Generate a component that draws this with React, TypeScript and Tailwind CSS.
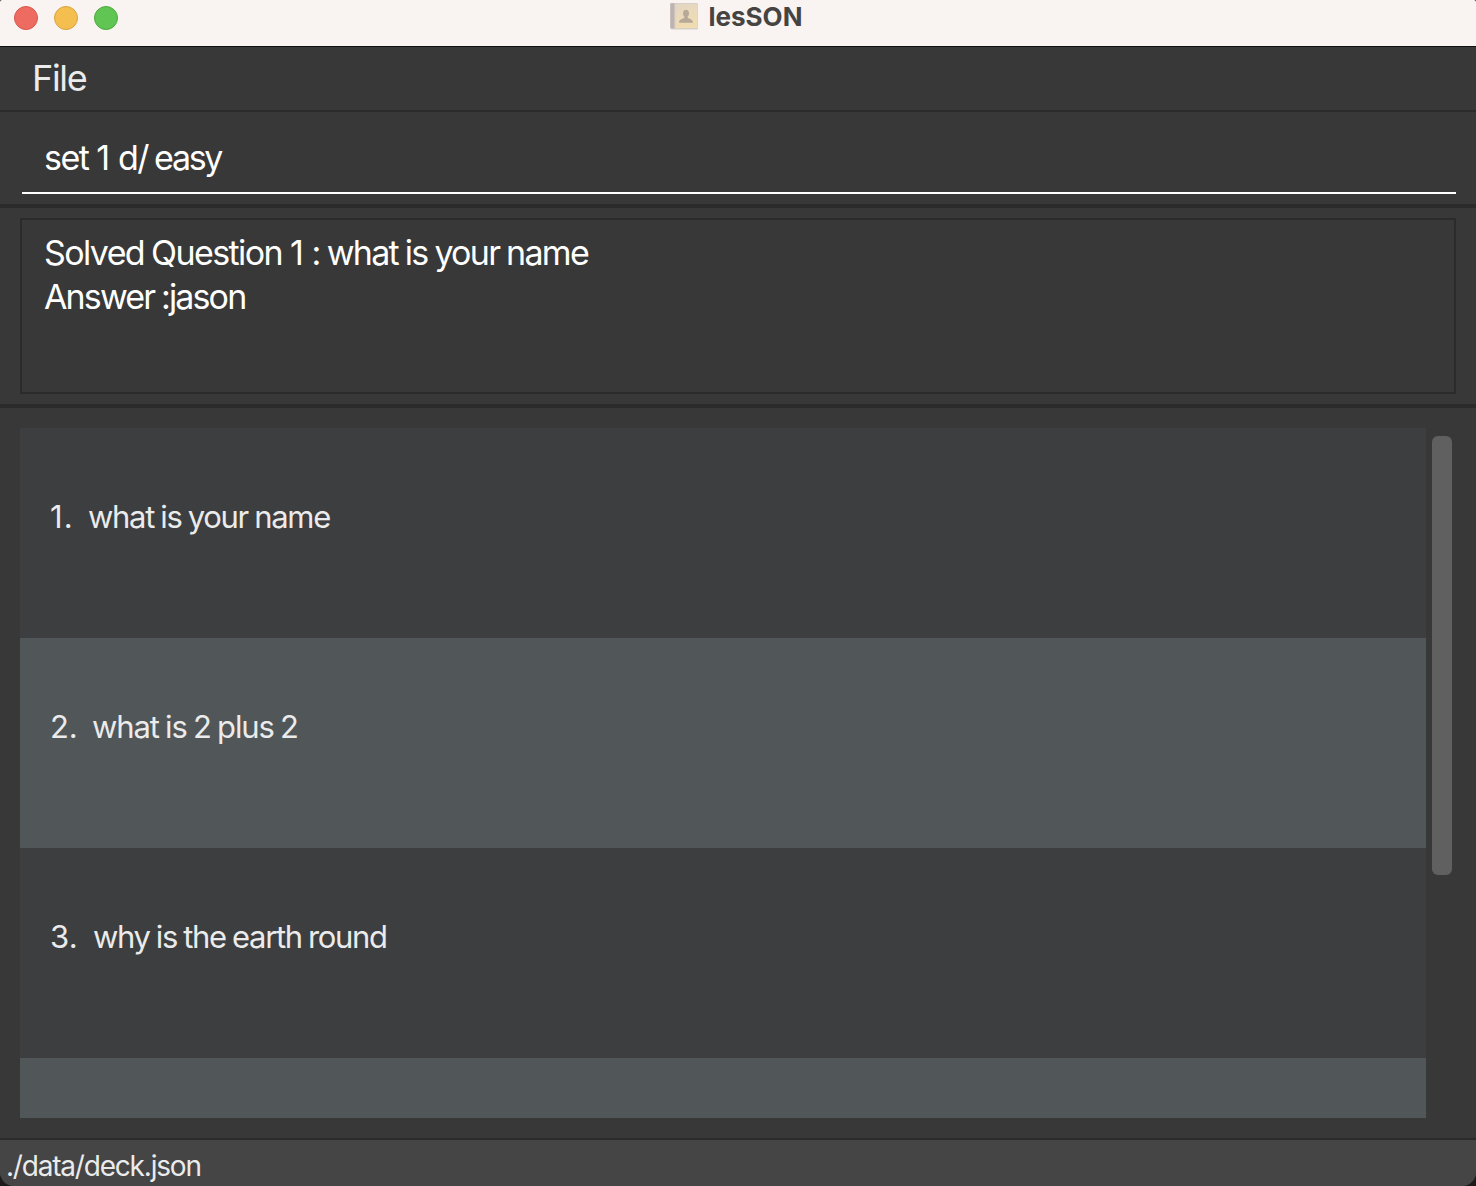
const questions = [
  { id: 1, text: "what is your name", gap: "w-[38px]", numeral: "tracking-[1.2px]", tracking: "tracking-[-1.3px]" },
  { id: 2, text: "what is 2 plus 2", gap: "w-[42px]", numeral: "tracking-[-0.2px]", tracking: "tracking-[-1.15px]" },
  { id: 3, text: "why is the earth round", gap: "w-[43px]", numeral: "tracking-[0.2px]", tracking: "tracking-[-1.33px]" },
];

function DeckIcon() {
  return (
    <svg width="30" height="30" viewBox="0 0 30 30" className="shrink-0">
      <defs>
        <linearGradient id="cover" x1="0" y1="0" x2="0.3" y2="1">
          <stop offset="0" stopColor="#e2d6c4" />
          <stop offset="0.5" stopColor="#eadabb" />
          <stop offset="1" stopColor="#f0dcb1" />
        </linearGradient>
      </defs>
      <rect x="2" y="3" width="27" height="26.4" rx="1" fill="#d8d0c7" />
      <rect x="1.2" y="3.2" width="4.4" height="25.2" rx="0.6" fill="#bdb3b0" />
      <rect x="5.2" y="3.2" width="1.4" height="25.2" fill="#d0c8c3" />
      <rect x="6.4" y="4" width="22" height="24" fill="url(#cover)" />
      <path
        d="M17 9.8c1.9 0 3 1.4 3 3.5 0 1.500-.6 2.600-1.300 3.200v1.200c1 .8 5.300 1.500 5.300 5H10c0-3.500 4.300-4.200 5.300-5v-1.200c-.7-.6-1.300-1.700-1.300-3.200 0-2.100 1.100-3.500 3-3.500z"
        fill="#b7a998"
      />
    </svg>
  );
}

function TitleBar() {
  return (
    <header className="grid h-[46px] shrink-0 grid-cols-[1fr_auto_1fr] items-start bg-[#f9f4f1]">
      <div className="flex gap-4 pt-1.5 pl-3.5">
        <span className="size-6 rounded-full border border-[#d9564c] bg-[#ed6b60]" />
        <span className="size-6 rounded-full border border-[#d9a33e] bg-[#f5bf4f]" />
        <span className="size-6 rounded-full border border-[#4caa3d] bg-[#61c554]" />
      </div>
      <div className="flex items-start gap-2.5 pr-[5px]">
        <DeckIcon />
        <h1 className="pt-px text-[26px] leading-8 font-bold text-[#464443]">lesSON</h1>
      </div>
    </header>
  );
}

export default function App() {
  return (
    <div className="h-[1186px] w-[1476px] bg-[#1d1a1c]">
      <div className="flex h-full flex-col overflow-hidden rounded-t-[2px] rounded-b-[14px] bg-[#383838] font-['Inter',sans-serif] whitespace-nowrap">
        <TitleBar />
        <nav className="h-[66px] shrink-0 border-t border-b-2 border-t-[#111111] border-b-[#2b2b2b] pl-8">
          <button className="block h-[63px] text-[36px] leading-[63px] tracking-[-1.3px] text-[#ebebeb]">File</button>
        </nav>

        <section className="h-24 shrink-0 border-b-4 border-[#2b2b2b] pr-5 pl-[22px]">
          <div className="h-[82px] border-b-2 border-white pt-6 pl-[22px] text-[34px] leading-[44px] tracking-[-1.55px] text-white [word-spacing:-1px]">
            set <span className="ml-px tracking-[-0.3px]">1 </span>
            <span>d/ </span>
            <span className="-ml-px tracking-[-2.3px]">easy</span>
          </div>
        </section>

        <section className="h-[200px] shrink-0 border-b-4 border-[#2b2b2b] px-5 pt-2.5">
          <div className="h-44 border-2 border-[#2b2b2b] pt-[11px] pl-[22px] text-[34px] leading-[44px] text-white [word-spacing:-1px]">
            <p className="tracking-[-1.6px]">
              Solved Question <span className="ml-px tracking-[-0.4px]">1 </span>
              <span>: </span>
              <span className="tracking-[-1.72px]">what is your name</span>
            </p>
            <p className="tracking-[-1.85px]">Answer :jason</p>
          </div>
        </section>

        <main className="flex h-[730px] shrink-0 py-5 pl-5">
          <ol className="h-[690px] w-[1406px] shrink-0 overflow-hidden text-[31px] leading-[40px] text-[#ebebeb]">
            {questions.map((q) => (
              <li key={q.id} className="flex h-[210px] bg-[#3c3e3f] pt-[69px] pl-[30px] even:bg-[#515658]">
                <span className={`${q.gap} ${q.numeral} shrink-0`}>{q.id}.</span>
                <span className={`${q.tracking} [word-spacing:-1.2px]`}>{q.text}</span>
              </li>
            ))}
            <li className="h-[210px] bg-[#515658]" />
          </ol>
          <div className="ml-1.5 pt-2">
            <div className="h-[439px] w-5 rounded-md bg-[#606060]" />
          </div>
        </main>

        <footer className="h-12 shrink-0 border-t-2 border-[#2b2b2b] bg-[#454545] pt-1.5 pl-1.5 text-[28px] leading-10 tracking-[-1.2px] text-[#ebebeb]">
          ./data/deck.json
        </footer>
      </div>
    </div>
  );
}
